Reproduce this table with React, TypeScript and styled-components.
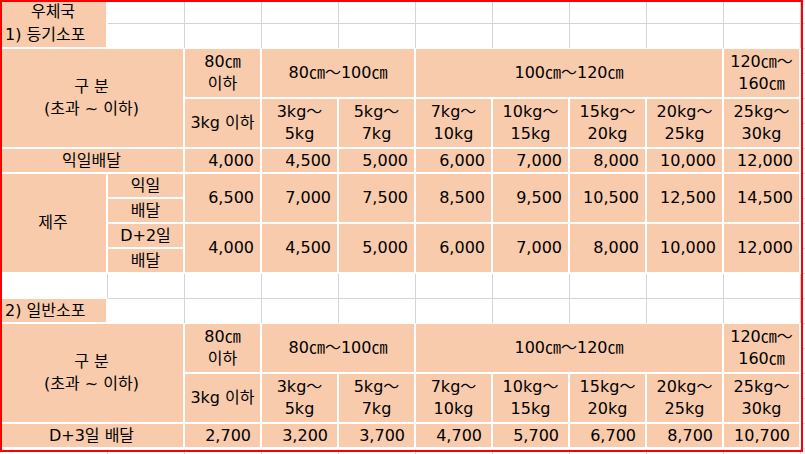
import React from 'react';
import styled, {createGlobalStyle, css} from 'styled-components';

const PEACH = '#f8cbad';
const GRID = '#d4d4d4';

type Spec = {
  t?: string;
  c?: number;
  r?: number;
  f?: boolean;
  a?: 'left' | 'center' | 'right';
  pr?: number;
};

const blank = (n: number): Spec[] => Array.from({length: n}, () => ({}));

const weights = ['3kg～\n5kg', '5kg～\n7kg', '7kg～\n10kg', '10kg～\n15kg', '15kg～\n20kg', '20kg～\n25kg', '25kg～\n30kg'];

const header: Spec[] = [
  {t: '구 분\n(초과 ~ 이하)', c: 2, r: 4, f: true},
  {t: '80㎝\n이하', r: 2, f: true},
  {t: '80㎝～100㎝', c: 2, r: 2, f: true},
  {t: '100㎝～120㎝', c: 4, r: 2, f: true},
  {t: '120㎝～\n160㎝', r: 2, f: true},
  ...blank(2),
  {t: '3kg 이하', r: 2, f: true},
  ...weights.map((w) => ({t: w, r: 2, f: true})),
  ...blank(2),
];

const prices = (list: string[], r = 1, pr = 6): Spec[] => list.map((t) => ({t, r, pr, f: true, a: 'right' as const}));

const nextDay = ['4,000', '4,500', '5,000', '6,000', '7,000', '8,000', '10,000', '12,000'];
const jejuNext = ['6,500', '7,000', '7,500', '8,500', '9,500', '10,500', '12,500', '14,500'];
const normal = ['2,700', '3,200', '3,700', '4,700', '5,700', '6,700', '8,700', '10,700'];

const cells: Spec[] = [
  ...blank(20),
  ...header,
  {t: '익일배달', c: 2, f: true},
  ...prices(nextDay),
  ...blank(1),
  {t: '제주', r: 4, f: true},
  {t: '익일', f: true},
  ...prices(jejuNext, 2),
  ...blank(1),
  {t: '배달', f: true},
  ...blank(1),
  {t: 'D+2일', f: true},
  ...prices(nextDay, 2),
  ...blank(1),
  {t: '배달', f: true},
  ...blank(1),
  ...blank(11),
  {t: '2) 일반소포', f: true, a: 'left'},
  ...blank(10),
  ...header,
  {t: 'D+3일 배달', c: 2, f: true},
  ...prices(normal, 1, 9),
  ...blank(1),
  ...blank(11),
];

const App: React.FunctionComponent = () => {
  return (
    <>
      <GlobalStyle />
      <Page>
        <Sheet>
          <Caption>
            <CaptionLine>{'우체국'}</CaptionLine>
            <CaptionLine $left>{'1) 등기소포'}</CaptionLine>
          </Caption>
          {cells.map((cell, i) => (
            <Cell key={i} $fill={cell.f} $col={cell.c} $row={cell.r} $align={cell.a} $pr={cell.pr}>
              {cell.t}
            </Cell>
          ))}
        </Sheet>
        <Frame />
      </Page>
    </>
  );
};

const GlobalStyle = createGlobalStyle`
  html, body {
    margin: 0;
    background: #fff;
    overflow: hidden;
  }
`;

const Page = styled.div`
  position: relative;
  width: 805px;
  height: 454px;
  overflow: hidden;
  font-family: 'DejaVu Sans', 'Noto Sans CJK KR', sans-serif;
  font-size: 16px;
  color: #000;
`;

const Sheet = styled.div`
  display: grid;
  grid-template-columns: 107px repeat(9, 76px) 1fr;
  grid-template-rows: 23px;
  grid-auto-rows: 24px;
  gap: 1px;
  background: ${GRID};
  width: 805px;
`;

const filled = css`
  background: ${PEACH};
  border-right: 1px solid #fff;
  border-bottom: 1px solid #fff;
  box-shadow: 0 0 0 1px #fff;
`;

const Cell = styled.div<{$fill?: boolean; $col?: number; $row?: number; $align?: string; $pr?: number}>`
  grid-column: span ${({$col}) => $col ?? 1};
  grid-row: span ${({$row}) => $row ?? 1};
  display: flex;
  align-items: center;
  justify-content: ${({$align}) => ($align === 'left' ? 'flex-start' : $align === 'right' ? 'flex-end' : 'center')};
  padding: ${({$align, $pr}) => ($align === 'left' ? '0 0 0 5px' : $align === 'right' ? `0 ${$pr ?? 6}px 0 0` : '0')};
  box-sizing: border-box;
  background: #fff;
  white-space: pre-line;
  text-align: center;
  line-height: 22px;
  ${({$fill}) => $fill && filled}
`;

const Caption = styled.div`
  grid-column: 1;
  grid-row: 1 / span 2;
  display: grid;
  grid-template-rows: 23px 1fr;
  box-sizing: border-box;
  ${filled}
`;

const CaptionLine = styled.div<{$left?: boolean}>`
  display: flex;
  align-items: center;
  justify-content: ${({$left}) => ($left ? 'flex-start' : 'center')};
  padding-left: ${({$left}) => ($left ? '5px' : '0')};
  line-height: 22px;
`;

const Frame = styled.div`
  position: absolute;
  left: 0;
  top: 0;
  width: 803px;
  height: 452px;
  box-sizing: border-box;
  border: 2px solid #ff0000;
  pointer-events: none;
`;

export default App;
